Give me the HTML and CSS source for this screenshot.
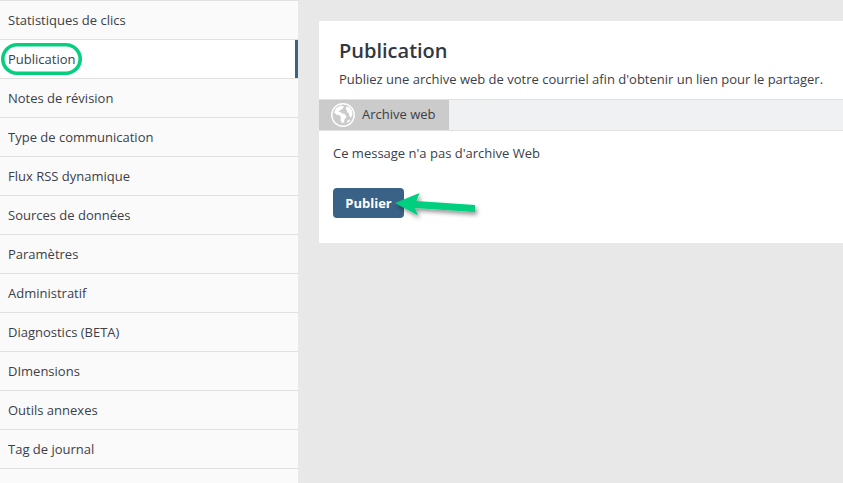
FILE: index.html
```html
<!DOCTYPE html>
<html lang="fr">
<head>
<meta charset="utf-8">
<title>Publication</title>
<link rel="stylesheet" href="styles.css">
</head>
<body>
<div class="app">
  <nav class="sidebar">
    <a class="item">Statistiques de clics</a>
    <a class="item active">Publication</a>
    <a class="item">Notes de révision</a>
    <a class="item">Type de communication</a>
    <a class="item">Flux RSS dynamique</a>
    <a class="item">Sources de données</a>
    <a class="item">Paramètres</a>
    <a class="item">Administratif</a>
    <a class="item">Diagnostics (BETA)</a>
    <a class="item">DImensions</a>
    <a class="item">Outils annexes</a>
    <a class="item">Tag de journal</a>
  </nav>
  <main class="main">
    <section class="card">
      <header class="head">
        <h1 class="title">Publication</h1>
        <p class="lead">Publiez une archive web de votre courriel afin d'obtenir un lien pour le partager.</p>
      </header>
      <div class="tabs">
        <div class="tab">
          <svg class="globe" viewBox="0 0 24 24" aria-hidden="true">
            <circle cx="12" cy="12" r="11.2" fill="none" stroke="#fff" stroke-width="1.4"/>
            <path fill="#fff" d="M10 2.600 5.200 5 3 9.500l2.600 2.200 3 .6 1.400 2.200-.6 2.400 1.600 3.200 2-.6.6-3.400 2-2.200-1.600-2.600-3.200-1-1.600-1.600L7 8.600l2.600-1.600L12 5.600l.6-2.600z"/>
            <path fill="#fff" d="M15.600 3.600 14.600 6l1.600 1.400-.4 1.800 2 .8.4 2.400 1.600 2.600 1.600-3.200-.4-4.400-2.600-3.200z"/>
            <path fill="#fff" d="M18.600 16.400l-2 1-.8 2.200 2.200-.6 1.200-2z"/>
          </svg>
          <span class="tab-label">Archive web</span>
        </div>
      </div>
      <div class="body">
        <p class="msg">Ce message n'a pas d'archive Web</p>
        <button class="btn" type="button">Publier</button>
      </div>
    </section>
  </main>
</div>
<svg class="notes" viewBox="0 0 843 483" aria-hidden="true">
  <defs>
    <filter id="sh" x="-20%" y="-40%" width="140%" height="200%">
      <feDropShadow dx="2" dy="3" stdDeviation="2" flood-color="#000" flood-opacity=".4"/>
    </filter>
  </defs>
  <rect x="2.800" y="44.800" width="77.400" height="28.400" rx="14.200" fill="none" stroke="#05cf7f" stroke-width="3.600"/>
  <path filter="url(#sh)" fill="#05cf7f" d="M395 203 L419.500 193 L416.500 201 L475 205 L475 212 L415 208 L418 215.500 Z"/>
</svg>
</body>
</html>
```
FILE: styles.css
```css
html, body {
  margin: 0;
  padding: 0;
  height: 100%;
  overflow: hidden;
}
body {
  position: relative;
  font-family: "Open Sans", sans-serif;
  font-size: 13px;
  color: #3c4048;
  background: #e8e8e8;
}
.app {
  display: flex;
  height: 483px;
}
.sidebar {
  flex: none;
  box-sizing: border-box;
  width: 299px;
  background: #fafafa;
  border-right: 1px solid #e8e8e8;
  border-top: 1px solid #e0e0e0;
}
.item {
  display: block;
  box-sizing: border-box;
  height: 39px;
  line-height: 38px;
  padding-left: 8px;
  border-bottom: 1px solid #e0e0e0;
}
.active {
  background: #fff;
  box-shadow: inset -3px 0 0 #3a6286;
}
.main {
  flex: 1;
  min-width: 0;
  padding: 21px 0 0 20px;
}
.card {
  background: #fff;
  height: 222px;
}
.head {
  height: 60px;
  padding: 18px 20px 0;
}
.title {
  margin: 0;
  font-size: 20px;
  line-height: 24px;
  font-weight: 600;
  color: #33373f;
}
.lead {
  margin: 7px 0 0;
  line-height: 18px;
  white-space: nowrap;
}
.tabs {
  height: 30px;
  background: #f0f1f3;
  border-top: 1px solid #e0e0e0;
  border-bottom: 1px solid #e0e0e0;
}
.tab {
  display: flex;
  align-items: center;
  gap: 7px;
  box-sizing: border-box;
  width: 130px;
  height: 30px;
  padding-left: 12px;
  background: #cbcbcb;
}
.tab-label {
  margin-top: -2px;
}
.globe {
  width: 24px;
  height: 24px;
}
.body {
  padding: 13px 14px 0;
}
.msg {
  margin: 0;
  line-height: 18px;
}
.btn {
  display: block;
  margin-top: 26px;
  width: 71px;
  height: 30px;
  padding: 0;
  border: 0;
  border-radius: 4px;
  background: #3a6286;
  color: #fff;
  font: 700 13px "Open Sans", sans-serif;
}
.notes {
  position: absolute;
  left: 0;
  top: 0;
  width: 843px;
  height: 483px;
  pointer-events: none;
}
```
